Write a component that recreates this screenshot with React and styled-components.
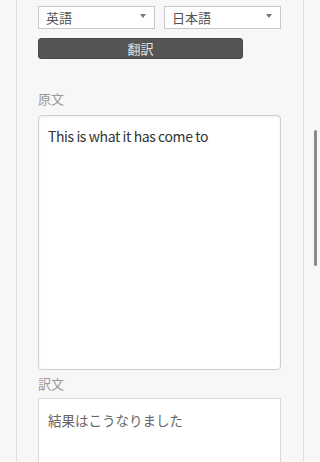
import React from 'react';
import styled, { createGlobalStyle } from 'styled-components';

const GlobalStyle = createGlobalStyle`
  html, body {
    margin: 0;
    padding: 0;
    background-color: #f7f7f7;
    overflow: hidden;
  }
  * {
    box-sizing: border-box;
  }
`;

const Page = styled.div`
  display: flex;
  height: 462px;
  padding-left: 16px;
  font-family: "Noto Sans CJK JP", "Noto Sans", sans-serif;
`;

const Panel = styled.div`
  display: flex;
  flex-direction: column;
  width: 288px;
  border-left: 1px solid #dedede;
  border-right: 1px solid #dedede;
  background-color: #f7f7f7;
  padding: 4px 22px 0 21px;
`;

const LangRow = styled.div`
  display: grid;
  grid-template-columns: 1fr 1fr;
  gap: 9px;
`;

const SelectWrap = styled.div`
  position: relative;

  &::after {
    content: '';
    position: absolute;
    right: 9px;
    top: 10px;
    border-left: 3px solid transparent;
    border-right: 3px solid transparent;
    border-top: 4px solid #777;
    pointer-events: none;
  }
`;

const Select = styled.select`
  appearance: none;
  width: 100%;
  height: 23px;
  border: 1px solid #c8c8c8;
  border-radius: 0;
  background-color: #fff;
  color: #555;
  font-family: inherit;
  font-size: 13px;
  padding: 0 0 0 7px;
  line-height: 21px;
  outline: none;
`;

const TranslateButton = styled.button`
  width: 205px;
  height: 25px;
  margin-top: 9px;
  border: 1px solid #4a4a4a;
  border-radius: 3px;
  background-color: #555;
  color: #e2e2e2;
  font-family: inherit;
  font-size: 13px;
  padding: 0;
  cursor: pointer;
`;

const Label = styled.div`
  color: #999;
  font-size: 13px;
  line-height: 19px;
  margin-top: ${p => p.$top}px;
`;

const TextBox = styled.textarea`
  display: block;
  width: 100%;
  height: ${p => p.$height}px;
  flex-shrink: 0;
  resize: none;
  outline: none;
  background-color: #fff;
  font-family: inherit;
  border: 1px solid ${p => (p.$rounded ? '#cfcfcf' : '#dadada')};
  border-radius: ${p => (p.$rounded ? '4px' : '0')};
  box-shadow: ${p => (p.$rounded ? 'inset 0 1px 2px rgba(0, 0, 0, 0.08)' : 'none')};
  color: ${p => (p.$rounded ? '#333' : '#666')};
  font-size: ${p => (p.$rounded ? '14px' : '13.5px')};
  letter-spacing: ${p => (p.$rounded ? '-0.4px' : '0')};
  line-height: ${p => (p.$rounded ? '22px' : '21px')};
  padding: ${p => (p.$rounded ? '9px 9px' : '11px 9px')};
  margin-top: ${p => p.$top}px;
`;

const ScrollThumb = styled.div`
  position: fixed;
  right: 3px;
  top: 130px;
  width: 3px;
  height: 136px;
  border-radius: 2px;
  background-color: #8a8a8a;
`;

export default function App() {
  return (
    <>
      <GlobalStyle />
      <Page>
        <Panel>
          <LangRow>
            <SelectWrap>
              <Select defaultValue="en">
                <option value="en">英語</option>
                <option value="ja">日本語</option>
              </Select>
            </SelectWrap>
            <SelectWrap>
              <Select defaultValue="ja">
                <option value="en">英語</option>
                <option value="ja">日本語</option>
              </Select>
            </SelectWrap>
          </LangRow>
          <TranslateButton>翻訳</TranslateButton>

          <Label $top={30}>原文</Label>
          <TextBox $rounded $top={7} $height={255} defaultValue="This is what it has come to" />

          <Label $top={4}>訳文</Label>
          <TextBox $top={5} $height={120} readOnly defaultValue="結果はこうなりました" />
        </Panel>
      </Page>
      <ScrollThumb />
    </>
  );
}
